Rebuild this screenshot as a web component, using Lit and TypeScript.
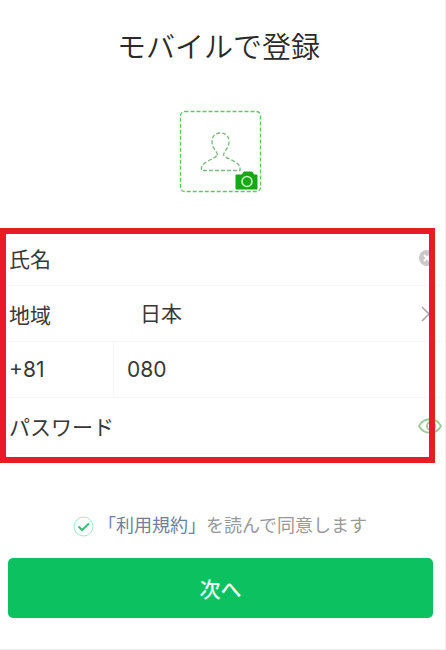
import { LitElement, html, css } from "lit";
import { customElement, state } from "lit/decorators.js";

@customElement("app-root")
export class AppRoot extends LitElement {
  @state() private showPassword = false;

  static styles = css`
    :host {
      display: block;
      box-sizing: border-box;
      min-height: 100vh;
      background: #fff;
      color: #383838;
      font-family: Inter, "Noto Sans CJK JP", sans-serif;
      font-size: 21px;
    }
    *, *::before, *::after { box-sizing: border-box; }
    .page {
      display: flex;
      flex-direction: column;
      min-height: 100vh;
      padding-top: 24px;
      border-right: 1px solid #f0f0f0;
      border-bottom: 1px solid #efefef;
    }
    h1 {
      margin: 0;
      padding-right: 8px;
      font-size: 29px;
      line-height: 42px;
      font-weight: 350;
      color: #2a2a2a;
      text-align: center;
      font-family: "Noto Sans CJK JP", sans-serif;
    }
    button, input, select {
      margin: 0;
      padding: 0;
      border: 0;
      background: none;
      color: inherit;
      font: inherit;
      outline: none;
    }
    .avatar {
      align-self: center;
      width: 84px;
      height: 84px;
      margin: 44px 4px 0 0;
    }
    svg { display: block; }
    .fields {
      position: relative;
      margin-top: 34px;
      padding: 2px 3px 9px 9px;
    }
    .frame {
      position: absolute;
      inset: 0 10px 0 0;
      border: 6px solid #e81c24;
      pointer-events: none;
    }
    .row {
      display: flex;
      align-items: center;
      height: 56px;
      border-bottom: 1px solid #f6f6f6;
    }
    .row:last-of-type { border-bottom: 0; }
    .row label { white-space: nowrap; }
    .row input, .row select {
      flex: 1;
      min-width: 0;
      height: 100%;
      appearance: none;
    }
    .name { width: 131px; }
    .code {
      display: flex;
      align-items: center;
      width: 105px;
      height: 100%;
      border-right: 1px solid #f6f6f6;
    }
    .row .phone { padding-left: 13px; }
    .pass { width: 131px; }
    .icon { flex: none; width: 24px; height: 24px; }
    .agree {
      display: flex;
      align-items: center;
      justify-content: center;
      gap: 4px;
      margin-top: 50px;
      padding-right: 5px;
      font-size: 18px;
      line-height: 26px;
      color: #999;
    }
    .check {
      position: relative;
      width: 21px;
      height: 21px;
    }
    .check input {
      position: absolute;
      inset: 0;
      width: 100%;
      height: 100%;
      margin: 0;
      opacity: 0;
    }
    .check .tick { opacity: 0; }
    .check input:checked + svg .tick { opacity: 1; }
    a { color: #71809a; text-decoration: none; }
    .next {
      height: 60px;
      margin: 19px 12px 31px 8px;
      border-radius: 5px;
      background: #0cc160;
      color: #f2fff6;
      font-weight: 500;
    }
  `;

  render() {
    return html`
      <main class="page">
        <h1>モバイルで登録</h1>
        <button class="avatar" type="button" aria-label="写真を追加">
          <svg width="84" height="84" viewBox="0 0 84 84" fill="none">
            <rect x="1.5" y="1.5" width="80" height="80" rx="4" stroke="#62c562" stroke-width="1.3" stroke-dasharray="4 2" />
            <path d="M38.5 45 C38 41 33 38 33 32 C33 26 36 23 41.500 23 C47 23 50 26 50 32 C50 38 45 41 44.500 45 C47 49 59 51 61 57 V60.500 H22.500 V57 C25 51 36 49 38.500 45 Z" stroke="#7cb87c" stroke-width="1.3" stroke-dasharray="4 2" />
            <path d="M57 65 h6 l2-3 h8 l2 3 h3 v14 h-21 z" fill="#16a916" stroke="#16a916" stroke-width="1" stroke-linejoin="round" />
            <circle cx="68" cy="71.500" r="5" stroke="#c6f5bd" stroke-width="1.6" />
          </svg>
        </button>

        <form class="fields" @submit=${(e: Event) => e.preventDefault()}>
          <div class="row">
            <label class="name" for="name">氏名</label>
            <input id="name" type="text" />
            <button class="icon" type="button" aria-label="消去">
              <svg width="24" height="24" viewBox="0 0 24 24">
                <circle cx="9" cy="12" r="8" fill="#c9c9c9" />
                <path d="M6 9 l6 6 M12 9 l-6 6" stroke="#fff" stroke-width="1.8" />
              </svg>
            </button>
          </div>
          <div class="row">
            <label class="name" for="region">地域</label>
            <select id="region"><option>日本</option></select>
            <svg class="icon" viewBox="0 0 24 24" fill="none" aria-hidden="true">
              <path d="M4 5 l7 7 l-7 7" stroke="#a8a8a8" stroke-width="1.7" />
            </svg>
          </div>
          <div class="row">
            <label class="code" for="phone">+81</label>
            <input class="phone" id="phone" type="tel" value="080" />
          </div>
          <div class="row">
            <label class="pass" for="password">パスワード</label>
            <input id="password" type=${this.showPassword ? "text" : "password"} />
            <button class="icon" type="button" aria-label="パスワードを表示"
              @click=${() => (this.showPassword = !this.showPassword)}>
              <svg width="24" height="24" viewBox="0 0 24 24" fill="none" stroke="#98cc98" stroke-width="1.8">
                <path d="M1 12 C6 3 18 3 23 12 C18 21 6 21 1 12 Z" />
                <circle cx="13" cy="12" r="4" />
              </svg>
            </button>
          </div>
          <div class="frame"></div>
        </form>

        <div class="agree">
          <span class="check">
            <input id="agree" type="checkbox" checked aria-label="利用規約に同意" />
            <svg width="21" height="21" viewBox="0 0 21 21" fill="none">
              <circle cx="10.500" cy="10.500" r="9.500" stroke="#a5e8c4" stroke-width="1" />
              <path class="tick" d="M5.500 10.500 l3.500 3.500 l7-6.500" stroke="#35c279" stroke-width="2" />
            </svg>
          </span>
          <label for="agree"><a href="#terms">「利用規約」</a>を読んで同意します</label>
        </div>
        <button class="next" type="button">次へ</button>
      </main>
    `;
  }
}
